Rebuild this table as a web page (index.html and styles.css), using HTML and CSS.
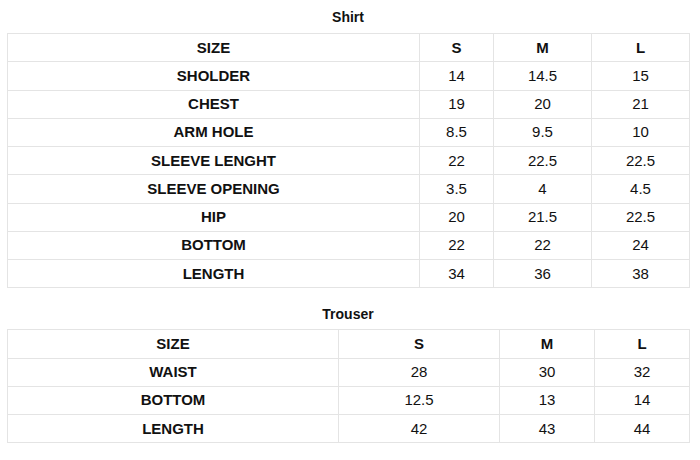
FILE: index.html
```html
<!DOCTYPE html>
<html>
<head>
<meta charset="utf-8">
<link rel="stylesheet" href="styles.css">
</head>
<body>
<div class="page">
  <h2 class="title">Shirt</h2>
  <table class="chart shirt">
    <colgroup><col class="c1"><col class="c2"><col class="c3"><col class="c4"></colgroup>
    <tr class="head"><td>SIZE</td><td>S</td><td>M</td><td>L</td></tr>
    <tr><td class="lbl">SHOLDER</td><td>14</td><td>14.5</td><td>15</td></tr>
    <tr><td class="lbl">CHEST</td><td>19</td><td>20</td><td>21</td></tr>
    <tr><td class="lbl">ARM HOLE</td><td>8.5</td><td>9.5</td><td>10</td></tr>
    <tr><td class="lbl">SLEEVE LENGHT</td><td>22</td><td>22.5</td><td>22.5</td></tr>
    <tr><td class="lbl">SLEEVE OPENING</td><td>3.5</td><td>4</td><td>4.5</td></tr>
    <tr><td class="lbl">HIP</td><td>20</td><td>21.5</td><td>22.5</td></tr>
    <tr><td class="lbl">BOTTOM</td><td>22</td><td>22</td><td>24</td></tr>
    <tr><td class="lbl">LENGTH</td><td>34</td><td>36</td><td>38</td></tr>
  </table>
  <h2 class="title second">Trouser</h2>
  <table class="chart trouser">
    <colgroup><col class="t1"><col class="t2"><col class="t3"><col class="t4"></colgroup>
    <tr class="head"><td>SIZE</td><td>S</td><td>M</td><td>L</td></tr>
    <tr><td class="lbl">WAIST</td><td>28</td><td>30</td><td>32</td></tr>
    <tr><td class="lbl">BOTTOM</td><td>12.5</td><td>13</td><td>14</td></tr>
    <tr><td class="lbl">LENGTH</td><td>42</td><td>43</td><td>44</td></tr>
  </table>
</div>
</body>
</html>
```
FILE: styles.css
```css
html, body {
  margin: 0;
  padding: 0;
  background: #fff;
}
body {
  font-family: "Liberation Sans", Arial, sans-serif;
  color: #111;
}
.page {
  width: 682px;
  padding: 7px 0 0 7px;
}
.title {
  margin: 0 0 6px;
  font-size: 14px;
  font-weight: bold;
  line-height: 20px;
  text-align: center;
}
.title.second {
  margin-top: 16px;
  margin-bottom: 5px;
}
.chart {
  width: 682px;
  border-collapse: collapse;
  table-layout: fixed;
}
.chart tr {
  height: 28.25px;
}
.chart td {
  border: 1px solid #e4e4e4;
  padding: 0;
  text-align: center;
  vertical-align: middle;
  font-size: 15px;
  line-height: 18px;
}
.chart .head td,
.chart td.lbl {
  font-weight: bold;
}
.c1 { width: 412px; }
.c2 { width: 74px; }
.c3 { width: 98px; }
.c4 { width: 98px; }
.t1 { width: 331px; }
.t2 { width: 161px; }
.t3 { width: 95px; }
.t4 { width: 95px; }
```
